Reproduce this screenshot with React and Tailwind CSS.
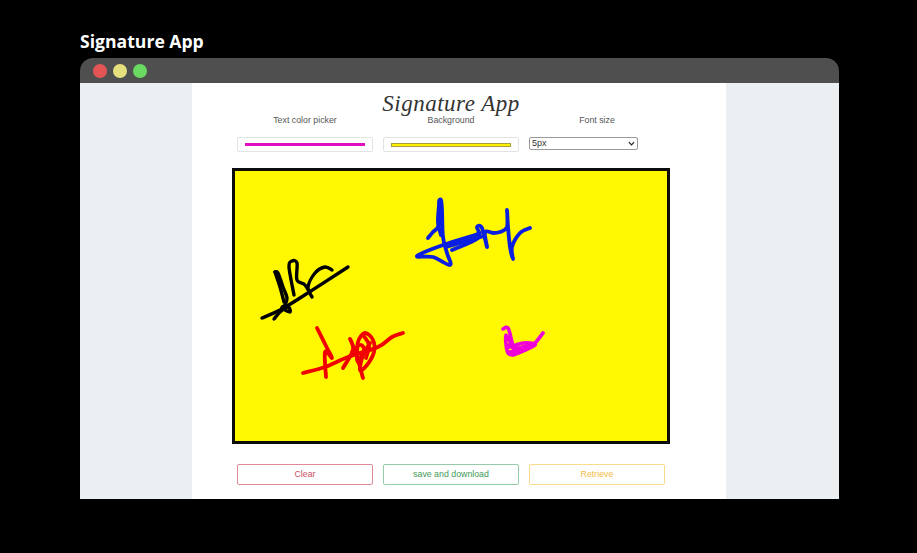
const strokes = [
  { c: "#0a1fe0", w: 3.8, p: [
    "428,238 433,232 438,227 440,215 439,202 441,200 442,210 443,237 447,253 450,265 433,257 417,256 443,245 475,235 480,233",
    "439,205 438,222 441,235",
    "452,250 478,238 477,227 482,228 487,247 485,232 493,233 500,232 507,227 507,210 508,227 510,247 513,259 512,247 520,233 530,228",
    "446,247 470,240 484,236",
  ] },
  { c: "#000000", w: 3.4, p: [
    "262,318 280,310 300,298 348,267",
    "275,272 278,273 283,287 287,298 285,305 282,308 290,312 288,307 280,312 274,319",
    "275,272 280,287 284,302",
    "294,295 289,267 292,261 297,263 297,280 305,285 312,297 308,287 315,273 325,267 332,270",
  ] },
  { c: "#f00000", w: 3.8, p: [
    "303,373 325,367 348,357 378,347 392,337 403,333",
    "317,328 327,348 332,358 325,352 326,377",
    "343,368 353,350 350,339 357,357 363,378",
    "357,360 358,342 365,333 373,340 374,352 367,365 360,370 363,355 370,343",
    "352,352 360,345 364,350 358,362",
    "363,335 369,345 366,358",
  ] },
  { c: "#f000d8", w: 3.6, p: [
    "503,329 508,328 512,342 514,350 506,335 508,353 518,353 533,345 543,333",
    "507,348 523,343 535,344 530,348 513,355",
    "508,345 518,348 526,346",
    "509,352 520,350 529,344",
  ] },
];

function smooth(str) {
  const p = str.split(" ").map((s) => s.split(",").map(Number));
  let d = `M${p[0][0]} ${p[0][1]}`;
  for (let i = 0; i < p.length - 1; i++) {
    const a = p[i - 1] || p[i];
    const b = p[i];
    const c = p[i + 1];
    const e = p[i + 2] || c;
    const k = 6;
    d += ` C${b[0] + (c[0] - a[0]) / k} ${b[1] + (c[1] - a[1]) / k} ${c[0] - (e[0] - b[0]) / k} ${c[1] - (e[1] - b[1]) / k} ${c[0]} ${c[1]}`;
  }
  return d;
}

const cols = "grid grid-cols-[136px_136px_136px] gap-x-[10px] justify-center";

function SideBar() {
  return <div className="bg-[#eceff2]" />;
}

function Swatch({ children }) {
  return (
    <div className="h-[15px] bg-white border border-[#e3e3e3] rounded-[2px] flex items-center px-[7px]">
      {children}
    </div>
  );
}

export default function App() {
  return (
    <div className="h-[553px] w-[917px] bg-black overflow-hidden px-[78px] pt-[27px] font-['Liberation_Sans',sans-serif]">
      <h1 className="h-[31px] pl-[2px] text-white text-[17.6px] leading-[28px] font-bold font-['Open_Sans',sans-serif]">
        Signature App
      </h1>
      <div className="ml-[2px] w-[759px]">
        <div className="h-[25px] bg-[#4f4f4f] rounded-t-[13px] flex items-center gap-[6px] pl-[13px]">
          <span className="w-[14px] h-[14px] rounded-full bg-[#e35555]" />
          <span className="w-[14px] h-[14px] rounded-full bg-[#e6df7e]" />
          <span className="w-[14px] h-[14px] rounded-full bg-[#6ad962]" />
        </div>
        <div className="h-[416px] grid grid-cols-[112px_534px_113px]">
          <SideBar />
          <main className="bg-white pr-[16px]">
            <div className="h-[28px] text-center text-[#333] text-[23px] leading-[42px] italic tracking-[0.5px] font-['Liberation_Serif',serif] font-normal">
              Signature App
            </div>
            <div className={`${cols} h-[26px] items-start pt-[3px] text-[8.8px] text-[#555] text-center`}>
              <span>Text color picker</span>
              <span>Background</span>
              <span>Font size</span>
            </div>
            <div className={cols}>
              <Swatch>
                <div className="h-[3px] w-full bg-[#e010c0]" />
              </Swatch>
              <Swatch>
                <div className="h-[4px] w-full bg-[#fff000] border border-[#a8a040]" />
              </Swatch>
              <div className="relative w-[109px] h-[13px]">
                <select
                  defaultValue="5px"
                  className="block w-full h-full appearance-none bg-white border border-[#999] rounded-[2px] pl-[2px] text-[9px] leading-[11px] text-[#333]"
                >
                  <option>5px</option>
                </select>
                <svg viewBox="0 0 8 5" className="absolute right-[3px] top-[4px] w-[7px] h-[5px] pointer-events-none" fill="none">
                  <path d="M1 1 L4 4 L7 1" stroke="#222" strokeWidth="1.4" />
                </svg>
              </div>
            </div>
            <div className="flex justify-center mt-[16px]">
              <div className="w-[438px] h-[276px] box-border border-[3px] border-[#0c0c0c] bg-[#fff800]">
                <svg viewBox="235 171 432 270" width="432" height="270" className="block" fill="none">
                  {strokes.map((s) =>
                    s.p.map((pts) => (
                      <path
                        key={pts}
                        d={smooth(pts)}
                        stroke={s.c}
                        strokeWidth={s.w}
                        strokeLinecap="round"
                        strokeLinejoin="round"
                      />
                    ))
                  )}
                </svg>
              </div>
            </div>
            <div className={`${cols} mt-[20px] text-[8.8px] text-center`}>
              <button className="h-[21px] border border-[#e08a98] rounded-[2px] text-[#c9505e] bg-white">Clear</button>
              <button className="h-[21px] border border-[#94cba8] rounded-[2px] text-[#3f9a5b] bg-white">save and download</button>
              <button className="h-[21px] border border-[#fbdc8a] rounded-[2px] text-[#f5bb40] bg-white">Retrieve</button>
            </div>
          </main>
          <SideBar />
        </div>
      </div>
    </div>
  );
}
